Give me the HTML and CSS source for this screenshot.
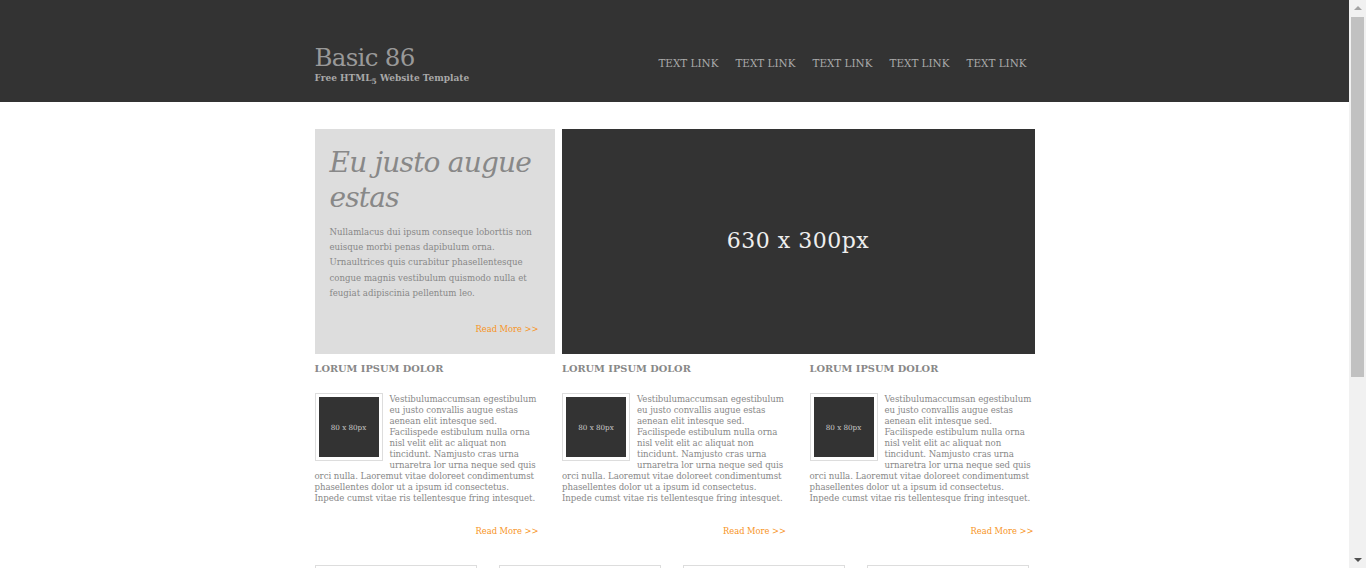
FILE: index.html
```html
<!DOCTYPE html>
<html>
<head>
<meta charset="utf-8">
<title>Basic 86</title>
<link rel="stylesheet" href="styles.css">
</head>
<body>
<header class="site-header">
  <div class="wrap header-inner">
    <div class="brand">
      <h1 class="brand-title">Basic 86</h1>
      <p class="brand-sub">Free HTML<sub>5</sub> Website Template</p>
    </div>
    <nav class="nav">
      <a href="#">TEXT LINK</a>
      <a href="#">TEXT LINK</a>
      <a href="#">TEXT LINK</a>
      <a href="#">TEXT LINK</a>
      <a href="#">TEXT LINK</a>
    </nav>
  </div>
</header>

<main class="wrap">
  <section class="hero">
    <div class="hero-text">
      <h2 class="hero-title">Eu justo augue estas</h2>
      <p class="hero-copy">Nullamlacus dui ipsum conseque loborttis non euisque morbi penas dapibulum orna. Urnaultrices quis curabitur phasellentesque congue magnis vestibulum quismodo nulla et feugiat adipiscinia pellentum leo.</p>
      <a class="more" href="#">Read More &gt;&gt;</a>
    </div>
    <div class="hero-image"><span>630 x 300px</span></div>
  </section>

  <section class="cols">
    <article class="col">
      <h3 class="col-title">LORUM IPSUM DOLOR</h3>
      <div class="col-body">
        <div class="thumb"><span>80 x 80px</span></div>
        <p>Vestibulumaccumsan egestibulum eu justo convallis augue estas aenean elit intesque sed. Facilispede estibulum nulla orna nisl velit elit ac aliquat non tincidunt. Namjusto cras urna urnaretra lor urna neque sed quis orci nulla. Laoremut vitae doloreet condimentumst phasellentes dolor ut a ipsum id consectetus. Inpede cumst vitae ris tellentesque fring intesquet.</p>
      </div>
      <a class="more" href="#">Read More &gt;&gt;</a>
    </article>
    <article class="col">
      <h3 class="col-title">LORUM IPSUM DOLOR</h3>
      <div class="col-body">
        <div class="thumb"><span>80 x 80px</span></div>
        <p>Vestibulumaccumsan egestibulum eu justo convallis augue estas aenean elit intesque sed. Facilispede estibulum nulla orna nisl velit elit ac aliquat non tincidunt. Namjusto cras urna urnaretra lor urna neque sed quis orci nulla. Laoremut vitae doloreet condimentumst phasellentes dolor ut a ipsum id consectetus. Inpede cumst vitae ris tellentesque fring intesquet.</p>
      </div>
      <a class="more" href="#">Read More &gt;&gt;</a>
    </article>
    <article class="col">
      <h3 class="col-title">LORUM IPSUM DOLOR</h3>
      <div class="col-body">
        <div class="thumb"><span>80 x 80px</span></div>
        <p>Vestibulumaccumsan egestibulum eu justo convallis augue estas aenean elit intesque sed. Facilispede estibulum nulla orna nisl velit elit ac aliquat non tincidunt. Namjusto cras urna urnaretra lor urna neque sed quis orci nulla. Laoremut vitae doloreet condimentumst phasellentes dolor ut a ipsum id consectetus. Inpede cumst vitae ris tellentesque fring intesquet.</p>
      </div>
      <a class="more" href="#">Read More &gt;&gt;</a>
    </article>
  </section>

  <section class="boxes">
    <div class="box"></div>
    <div class="box"></div>
    <div class="box"></div>
    <div class="box"></div>
  </section>
</main>
<footer class="site-footer"></footer>

<div class="scrollbar" aria-hidden="true">
  <div class="sb-arrow sb-up"></div>
  <div class="sb-thumb"></div>
  <div class="sb-arrow sb-down"></div>
</div>
</body>
</html>
```

FILE: styles.css
```css
html, body {
  margin: 0;
  padding: 0;
}
body {
  background: #fff;
  font-family: "DejaVu Serif", "Liberation Serif", serif;
  color: #888;
  margin-right: 17px;
}
.wrap {
  width: 720px;
  margin: 0 auto;
}
.site-header {
  background: #333;
  height: 102px;
}
.header-inner {
  display: flex;
  justify-content: space-between;
  align-items: flex-start;
}
.brand {
  padding-top: 43px;
}
.brand-title {
  margin: 0;
  font-weight: normal;
  font-size: 24.5px;
  line-height: 29px;
  color: #999;
  letter-spacing: -0.7px;
}
.brand-sub {
  margin: 0;
  font-size: 9px;
  font-weight: bold;
  color: #a8a8a8;
  line-height: 12px;
}
.brand-sub sub {
  font-size: 7.5px;
  vertical-align: -3px;
  line-height: 0;
}
.nav {
  display: flex;
  padding-top: 56px;
  padding-right: 8px;
  gap: 17px;
}
.nav a {
  color: #aaa;
  text-decoration: none;
  font-size: 10.4px;
  line-height: 14px;
}
main.wrap {
  padding-top: 27px;
}
.hero {
  display: flex;
  gap: 7px;
  height: 225px;
}
.hero-text {
  width: 240px;
  box-sizing: border-box;
  background: #ddd;
  padding: 16px 16px 0 15px;
  display: flex;
  flex-direction: column;
}
.hero-title {
  margin: 0;
  font-style: italic;
  font-weight: normal;
  font-size: 28px;
  line-height: 35px;
  color: #888;
  letter-spacing: -0.8px;
}
.hero-copy {
  margin: 10px 0 0;
  font-size: 8.6px;
  line-height: 15.2px;
  color: #888;
}
.more {
  align-self: flex-end;
  color: #f7941e;
  text-decoration: none;
  font-size: 8.3px;
  line-height: 12px;
}
.hero-text .more {
  margin-top: 22px;
}
.hero-image {
  width: 473px;
  background: #333;
  display: flex;
  align-items: center;
  justify-content: center;
}
.hero-image span {
  color: #eee;
  font-size: 22px;
  letter-spacing: 0.5px;
  padding-bottom: 3px;
}
.cols {
  display: grid;
  grid-template-columns: 225px 225px 225px;
  justify-content: space-between;
  margin-top: 8px;
}
.col {
  display: flex;
  flex-direction: column;
}
.col-title {
  margin: 0;
  font-size: 9.8px;
  line-height: 14px;
  font-weight: bold;
  color: #888;
}
.col-body {
  margin-top: 17px;
}
.thumb {
  float: left;
  width: 60px;
  height: 60px;
  padding: 3px;
  border: 1px solid #ddd;
  margin: 0 7px 0 0;
  background: #fff;
}
.thumb span {
  display: flex;
  width: 60px;
  height: 60px;
  background: #333;
  color: #ccc;
  align-items: center;
  justify-content: center;
  font-size: 7.2px;
}
.col-body p {
  margin: 0;
  padding-top: 1px;
  font-size: 8.6px;
  line-height: 11px;
  letter-spacing: -0.06px;
  color: #888;
}
.col .more {
  margin-top: 21px;
  margin-right: 1px;
}
.boxes {
  display: grid;
  grid-template-columns: repeat(4, 162px);
  gap: 22px;
  margin-top: 28px;
}
.box {
  height: 200px;
  border: 1px solid #ddd;
  box-sizing: border-box;
}
.site-footer {
  height: 70px;
}
.scrollbar {
  position: fixed;
  top: 0;
  right: 0;
  width: 17px;
  height: 100vh;
  background: #f1f1f1;
  display: flex;
  flex-direction: column;
  align-items: center;
}
.sb-arrow {
  width: 0;
  height: 0;
  border-left: 4px solid transparent;
  border-right: 4px solid transparent;
}
.sb-up {
  margin-top: 6px;
  border-bottom: 4px solid #a3a3a3;
}
.sb-thumb {
  margin-top: 7px;
  width: 13px;
  height: 360px;
  background: #c1c1c1;
}
.sb-down {
  margin-top: auto;
  margin-bottom: 6px;
  border-top: 4px solid #505050;
}
```
